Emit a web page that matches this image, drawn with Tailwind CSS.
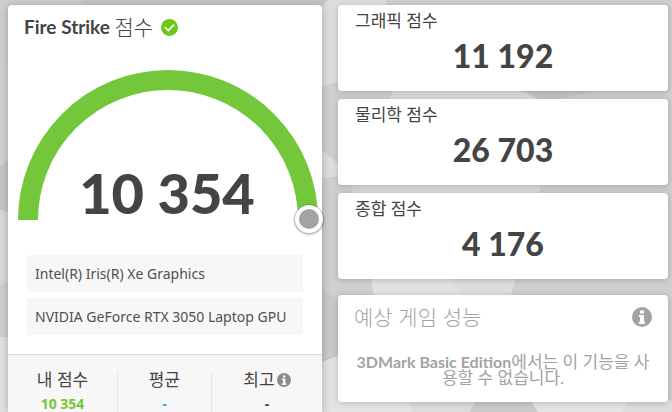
<!DOCTYPE html>
<html lang="ko">
<head>
<meta charset="utf-8">
<meta name="viewport" content="width=device-width, initial-scale=1">
<title>Fire Strike 점수</title>
<script src="https://cdn.jsdelivr.net/npm/@tailwindcss/browser@4"></script>
</head>
<body class="relative isolate min-h-screen overflow-x-hidden bg-[#cfcfcf] font-['Lato','Noto_Sans_CJK_KR',sans-serif] text-[#444]">
<!-- faceted backdrop -->
<svg class="absolute inset-0 -z-10 h-full w-full" viewBox="0 0 672 412" preserveAspectRatio="none" aria-hidden="true">
  <path d="M80 0h250l-8 5H84z" fill="#c8c8c8"/>
  <path d="M0 64h8v96l-8 6z" fill="#d2d2d2"/>
  <path d="M0 166l8-6v52l-8-2z" fill="#c6c6c6"/>
  <path d="M0 210l8 2v70l-8 3z" fill="#d9d9d9"/>
  <path d="M0 337h8v75H0z" fill="#e2e2e2"/>
  <path d="M322 8l6-8h58l8 30-56 52-16 4z" fill="#dedede"/>
  <path d="M322 150l16 14v12l-16 2z" fill="#dedede"/>
  <path d="M322 288l16 12v56l-16 6z" fill="#c9c9c9"/>
  <path d="M322 362l16-6 40 56h-56z" fill="#e2e2e2"/>
  <path d="M394 88h120l30 14H388z" fill="#dddddd"/>
  <path d="M544 102l66-14h-90z" fill="#c5c5c5"/>
  <path d="M350 183h190v12H354z" fill="#dadada"/>
  <path d="M371 278h80l16 20h-93z" fill="#e2e2e2"/>
  <path d="M450 278h66l-6 20h-44z" fill="#dddddd"/>
  <path d="M330 400h77l6 12h-83z" fill="#e4e4e4"/>
  <path d="M407 400h69l-6 12h-57z" fill="#dcdcdc"/>
  <path d="M476 400h54l8 12h-68z" fill="#cacaca"/>
  <path d="M530 400h99l-6 12h-85z" fill="#e4e4e4"/>
  <path d="M629 400h43v12h-49z" fill="#dcdcdc"/>
</svg>
<main class="grid min-h-screen grid-cols-[314fr_330fr] gap-4 pt-[5px] pr-1 pl-2">
  <section class="flex flex-col rounded-t bg-white shadow-[0_1px_8px_rgba(0,0,0,0.25)]">
    <h1 class="flex h-11 items-center px-4 text-[19px] font-bold">Fire Strike&nbsp;<span class="font-['Noto_Sans_CJK_KR',sans-serif] text-[21px] font-light">점수</span>
      <svg class="ml-2 size-[17px]" viewBox="0 0 17 17" role="img" aria-label="유효"><circle cx="8.500" cy="8.500" r="8.500" fill="#6cc818"/><path d="M4 8.200l3.300 3.300 5.800-5.800" fill="none" stroke="#fff" stroke-width="1.700"/></svg>
    </h1>
    <div class="relative mt-4 pr-px pl-[7px]">
      <svg class="block w-full overflow-visible" viewBox="0 0 306 170" aria-hidden="true">
        <path d="M13 155a140 140 0 0 1 280 0" fill="none" stroke="#74c63a" stroke-width="20"/>
        <circle cx="294" cy="155" r="16" fill="#000" opacity=".07"/>
        <circle cx="294" cy="154.500" r="15" fill="#000" opacity=".2"/>
        <circle cx="294" cy="154" r="14" fill="#fff"/>
        <circle cx="294" cy="154" r="10" fill="#a3a3a3"/>
      </svg>
      <p class="absolute inset-x-0 bottom-2 pl-1 text-center text-[56px] leading-[68px] font-black">10 354</p>
    </div>
    <ul class="mt-5 grid gap-[6px] px-[19px] font-['Noto_Sans',sans-serif] text-[14px] text-[#505050]">
      <li class="flex h-[37px] items-center bg-[#f7f7f7] px-2">Intel(R) Iris(R) Xe Graphics</li>
      <li class="flex h-[37px] items-center bg-[#f7f7f7] px-2">NVIDIA GeForce RTX 3050 Laptop GPU</li>
    </ul>
    <dl class="mt-[19px] grid flex-1 grid-cols-[110fr_94fr_110fr] divide-x divide-[#e6e6e6] border-t border-[#d9d9d9] bg-[#f7f7f7] pt-[17px] text-center font-['Noto_Sans','Noto_Sans_CJK_KR',sans-serif]">
      <div><dt class="text-[17px] leading-4">내 점수</dt><dd class="mt-2 text-[14px] leading-4 font-bold text-[#74c63a]">10 354</dd></div>
      <div><dt class="text-[17px] leading-4">평균</dt><dd class="mt-2 text-[14px] leading-4 font-bold text-[#2aa5e8]">-</dd></div>
      <div><dt class="flex items-center justify-center text-[17px] leading-4">최고<svg class="ml-0.5 size-[14px]" viewBox="0 0 20 20" role="img" aria-label="정보"><circle cx="10" cy="10" r="10" fill="#8c8c8c"/><path d="M8.500 3.500h3.500v3H8.500zM7 8h5v6.500h1.500V17H7v-2.500h1.500V10H7z" fill="#f7f7f7"/></svg></dt><dd class="mt-2 text-[14px] leading-4 font-bold">-</dd></div>
    </dl>
  </section>
  <div class="flex flex-col gap-2">
    <section class="rounded bg-white px-[17px] pt-2 pb-[17px] shadow-[0_1px_6px_rgba(0,0,0,0.2)]">
      <h2 class="text-[17px] leading-4">그래픽 점수</h2>
      <p class="mt-[9px] text-center text-[32px] leading-9 font-black">11 192</p>
    </section>
    <section class="rounded bg-white px-[17px] pt-2 pb-[17px] shadow-[0_1px_6px_rgba(0,0,0,0.2)]">
      <h2 class="text-[17px] leading-4">물리학 점수</h2>
      <p class="mt-[9px] text-center text-[32px] leading-9 font-black">26 703</p>
    </section>
    <section class="rounded bg-white px-[17px] pt-2 pb-[17px] shadow-[0_1px_6px_rgba(0,0,0,0.2)]">
      <h2 class="text-[17px] leading-4">종합 점수</h2>
      <p class="mt-[9px] text-center text-[32px] leading-9 font-black">4 176</p>
    </section>
    <section class="mt-2 rounded bg-white px-4 pt-3 pb-4 text-[#a3a3a3] shadow-[0_1px_6px_rgba(0,0,0,0.2)]">
      <div class="flex items-center justify-between">
        <h2 class="text-[21px] leading-5 font-light">예상 게임 성능</h2>
        <svg class="size-5" viewBox="0 0 20 20" role="img" aria-label="정보"><circle cx="10" cy="10" r="10" fill="#a3a3a3"/><path d="M8 3.500h4v3H8zM7 8h5v6.500h1V17H7v-2.500h1V10H7z" fill="#fff"/></svg>
      </div>
      <p class="mt-[27px] text-center text-[17px] leading-4 break-all"><span class="text-[16px] font-bold">3DMark Basic Edition</span>에서는 이 기능을 사용할 수 없습니다.</p>
    </section>
  </div>
</main>
</body>
</html>
